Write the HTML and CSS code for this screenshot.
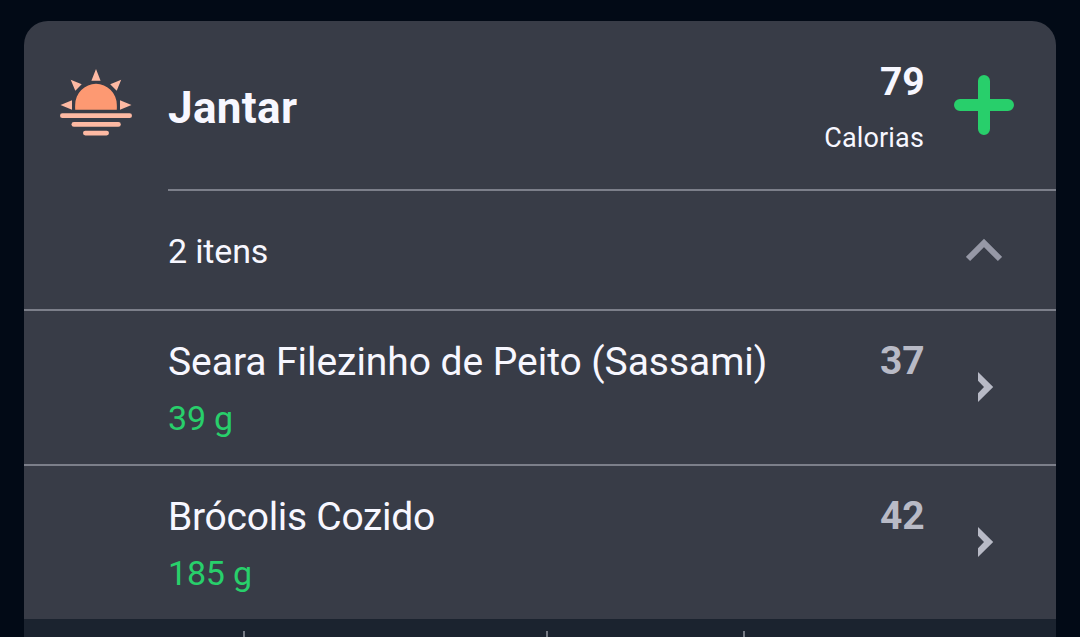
FILE: index.html
```html
<!DOCTYPE html>
<html lang="pt-BR">
<head>
<meta charset="utf-8">
<title>Jantar</title>
<link rel="stylesheet" href="styles.css">
</head>
<body>
<main class="card">
  <header class="meal">
    <svg class="meal-icon" viewBox="0 0 72 72" width="72" height="72">
      <path fill="#fd9972" d="M15.2 41.7Q15 39 15.2 36.6a20.8 20.8 0 0 1 41.6 0Q57 39 56.8 41.7z"/>
      <g fill="#fdb9a3">
        <path d="M36 1l4.6 11.8h-9.2zM10.7 11.7l11 4.6-6.4 6.4zM61.2 11.7l-4.5 11-6.5-6.4zM.5 37l11.5-4.8v9.6zM71.5 37L60 32.2v9.6z"/>
        <rect x="0" y="45.3" width="72" height="4.8" rx="2.4"/>
        <rect x="11.5" y="54" width="49.3" height="4.8" rx="2.4"/>
        <rect x="23" y="62.7" width="26" height="4.8" rx="2.4"/>
      </g>
    </svg>
    <h1 class="meal-name">Jantar</h1>
    <div class="total">
      <span class="total-value">79</span>
      <span class="total-label">Calorias</span>
    </div>
    <svg class="add" viewBox="0 0 60 60" width="60" height="60">
      <path d="M30 6v48M6 30h48" stroke="#28cf6b" stroke-width="12" stroke-linecap="round"/>
    </svg>
  </header>
  <section class="summary">
    <span class="count">2 itens</span>
    <svg class="collapse" viewBox="0 0 36 24" width="36" height="24">
      <path d="M2 21L18 5l16 16" fill="none" stroke="#9698a6" stroke-width="6"/>
    </svg>
  </section>
  <section class="item">
    <div class="item-text"><span class="item-name">Seara Filezinho de Peito (Sassami)</span><span class="item-amount">39 g</span></div>
    <span class="item-value">37</span>
    <svg class="open" viewBox="0 0 16 30" width="16" height="30"><path fill="#b8bac6" d="M0 0l15.2 15L0 30v-8.8L6 15 0 8.8z"/></svg>
  </section>
  <section class="item">
    <div class="item-text"><span class="item-name item-name-tight">Brócolis Cozido</span><span class="item-amount">185 g</span></div>
    <span class="item-value">42</span>
    <svg class="open" viewBox="0 0 16 30" width="16" height="30"><path fill="#b8bac6" d="M0 0l15.2 15L0 30v-8.8L6 15 0 8.8z"/></svg>
  </section>
  <footer class="nutrients"><i class="cell"></i><i class="cell"></i><i class="cell"></i><i></i></footer>
</main>
</body>
</html>
```
FILE: styles.css
```css
* { box-sizing: border-box; }
body {
  margin: 0;
  height: 637px;
  overflow: hidden;
  background: #020a16;
  color: #f7f7ff;
  font-family: Roboto, sans-serif;
}
svg { display: block; }
.card {
  margin: 21px 24px 0;
  height: 616px;
  background: #383c47;
  border-radius: 24px 24px 0 0;
  overflow: hidden;
}
.meal {
  display: grid;
  grid-template-columns: 72px 1fr auto 60px;
  height: 170px;
  padding: 0 42px 0 36px;
  background: linear-gradient(#7c7f8a, #7c7f8a) 144px 168px / 100% 2px no-repeat;
}
.meal-icon { margin-top: 47px; }
.meal-name {
  margin: 61px 0 0 36px;
  font-size: 44px;
  line-height: 52px;
  font-weight: 700;
  letter-spacing: 0.35px;
}
.total {
  display: flex;
  flex-direction: column;
  align-items: flex-end;
  margin-right: 30px;
  padding-top: 38px;
}
.total-value {
  margin-right: -0.7px;
  font-size: 39px;
  line-height: 46px;
  font-weight: 700;
}
.total-label {
  margin-top: 17px;
  font-size: 27px;
  line-height: 32px;
  letter-spacing: 0.15px;
}
.add { margin-top: 54px; }
.summary {
  display: flex;
  justify-content: space-between;
  height: 120px;
  padding: 0 54px 0 144px;
  border-bottom: 2px solid #7c7f8a;
}
.count {
  margin-top: 40px;
  font-size: 34px;
  line-height: 40px;
  letter-spacing: -0.15px;
}
.collapse { margin-top: 47px; }
.item {
  display: grid;
  grid-template-columns: 1fr auto 16px;
  height: 155px;
  padding: 0 62px 0 144px;
}
.item + .item { border-top: 2px solid #7c7f8a; }
.item:nth-of-type(2) { height: 153px; }
.item-text { display: flex; flex-direction: column; padding-top: 28px; }
.item-name { font-size: 39px; line-height: 46px; letter-spacing: -0.05px; }
.item-name-tight { letter-spacing: -0.28px; }
.item-amount {
  margin-top: 13px;
  font-size: 34px;
  line-height: 40px;
  letter-spacing: -0.2px;
  color: #28cf6b;
}
.item-value {
  margin: 27px 53.3px 0 0;
  font-size: 39px;
  line-height: 46px;
  font-weight: 700;
  color: #b8bac6;
}
.open { margin-top: 61px; }
.nutrients {
  display: grid;
  grid-template-columns: 221px 303px 197px 1fr;
  height: 18px;
  padding-top: 12px;
  background: #1b232f;
}
.cell { border-right: 2px solid #767a84; }
```
